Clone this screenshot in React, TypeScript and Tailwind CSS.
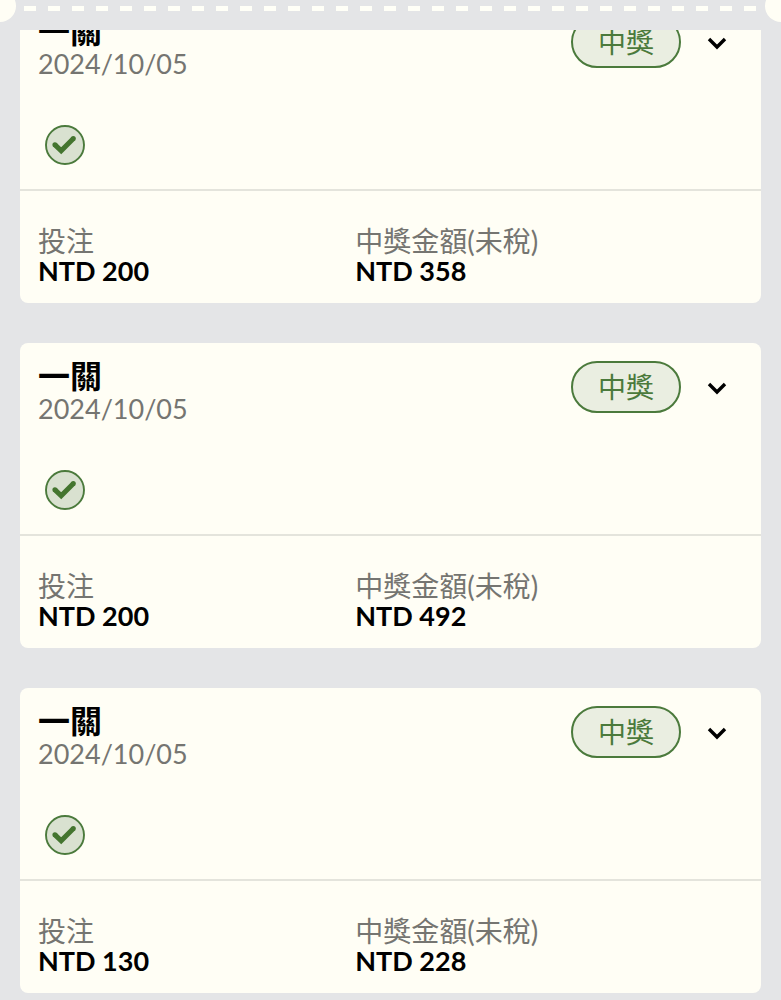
import React, { useState } from "react";

interface Bet {
  id: number;
  title: string;
  date: string;
  stake: number;
  payout: number;
}

const bets: Bet[] = [
  { id: 1, title: "一關", date: "2024/10/05", stake: 200, payout: 358 },
  { id: 2, title: "一關", date: "2024/10/05", stake: 200, payout: 492 },
  { id: 3, title: "一關", date: "2024/10/05", stake: 130, payout: 228 },
];

const CheckMark: React.FC = () => (
  <svg className="size-10" viewBox="0 0 40 40" fill="none" aria-hidden="true">
    <circle cx="20" cy="20" r="19" fill="#d9e1d0" stroke="#4b7a3c" strokeWidth="1.9" />
    <path d="M9.8 19.6 L16.2 25.8 L28.4 13.4" stroke="#44752f" strokeWidth="5" />
    <circle cx="9.9" cy="19.7" r="2.5" fill="#44752f" />
    <circle cx="28.3" cy="13.5" r="2.5" fill="#44752f" />
  </svg>
);

const Chevron: React.FC = () => (
  <svg className="h-4 w-5" viewBox="0 0 20 16" fill="none" aria-hidden="true">
    <path d="M2 5 L10 13 L18 5" stroke="#000" strokeWidth="3.4" />
  </svg>
);

// Torn ticket edge with a round notch on each side
const TicketEdge: React.FC = () => (
  <div className="relative h-[30px] shrink-0 px-6 pt-[6px]">
    <div className="h-[5px] bg-[repeating-linear-gradient(90deg,#fffff7_0px,#fffff7_12px,transparent_12px,transparent_24px)]" />
    <span className="absolute -top-[10px] -left-4 size-8 rounded-full bg-[#fffef5]" />
    <span className="absolute -top-[10px] -right-4 size-8 rounded-full bg-[#fffef5]" />
  </div>
);

const BetCard: React.FC<{ bet: Bet }> = ({ bet }) => {
  const [open, setOpen] = useState(false);

  return (
    <article className="rounded-lg bg-[#fffef5]">
      <div className="px-[18px] pt-4 pb-6">
        <div className="flex items-start justify-between">
          <div>
            <h2 className="text-[32px] leading-[34px] font-bold text-black">{bet.title}</h2>
            <p className="text-[27px] leading-8 text-[#757571]">{bet.date}</p>
          </div>
          <div className="flex items-center gap-[26px] pt-0.5 pr-4">
            <span className="flex h-[52px] w-[110px] items-center justify-center rounded-full border-2 border-[#4b7a3c] bg-[#eaeee1] text-[28px] text-[#4b7a3c]">
              中獎
            </span>
            <button
              type="button"
              aria-label="展開"
              aria-expanded={open}
              onClick={() => setOpen(!open)}>
              <Chevron />
            </button>
          </div>
        </div>
        <div className="mt-[45px] ml-[7px]">
          <CheckMark />
        </div>
      </div>

      <dl className="grid grid-cols-[45%_55%] border-t-2 border-[#e4e4dc] px-[18px] pt-[35px] pb-[17px] leading-[30px]">
        <div>
          <dt className="text-[28px] text-[#757571]">投注</dt>
          <dd className="text-[27px] font-bold text-black">NTD {bet.stake}</dd>
        </div>
        <div>
          <dt className="text-[28px] text-[#757571]">中獎金額(未稅)</dt>
          <dd className="text-[27px] font-bold text-black">NTD {bet.payout}</dd>
        </div>
      </dl>
    </article>
  );
};

const App: React.FC = () => {
  return (
    <div className="flex h-screen flex-col overflow-hidden bg-[#e4e5e7] font-[Lato,'Noto_Sans_CJK_TC',sans-serif]">
      <TicketEdge />
      {/* List is scrolled a little, first card slides under the edge */}
      <main className="min-h-0 flex-1 overflow-hidden px-5">
        <div className="-mt-8 flex flex-col gap-10">
          {bets.map((bet) => (
            <BetCard key={bet.id} bet={bet} />
          ))}
        </div>
      </main>
    </div>
  );
};

export default App;
